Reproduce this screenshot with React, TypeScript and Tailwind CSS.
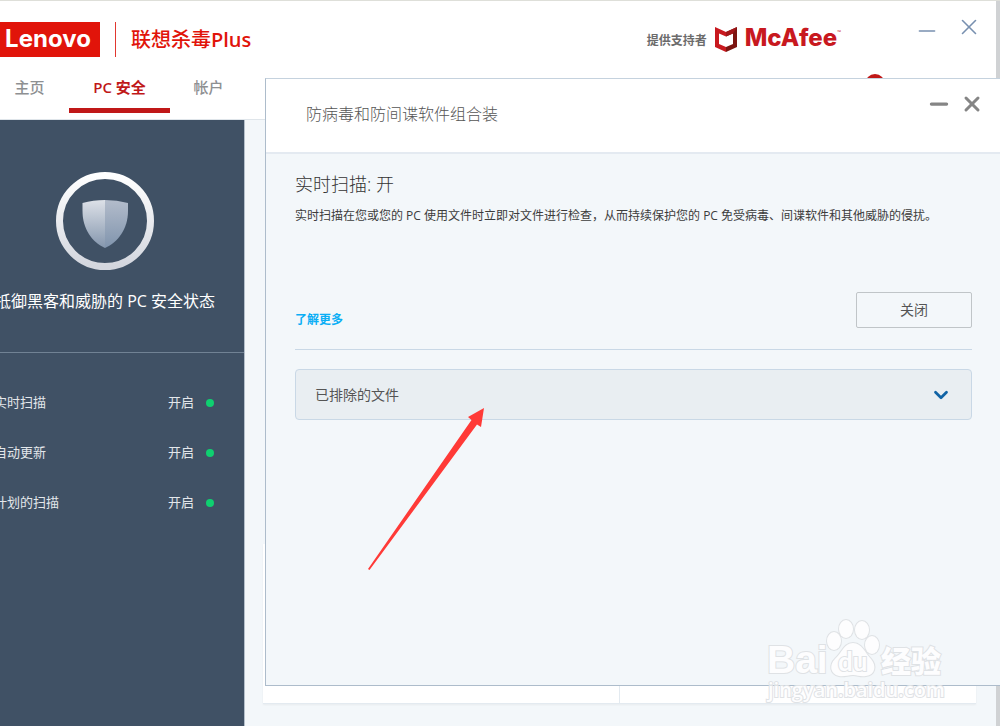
import { ChevronDown, Minus, X } from "lucide-react";

const tabs = [
  { label: "主页", active: false, className: "mr-[10px] w-[59px]" },
  { label: "PC 安全", active: true, className: "w-[101px]" },
  { label: "帐户", active: false, className: "w-[77px]" },
];

const statusItems = [
  { name: "实时扫描", state: "开启" },
  { name: "自动更新", state: "开启" },
  { name: "计划的扫描", state: "开启" },
];

function McAfeeMark() {
  return (
    <svg viewBox="0 0 22 25" className="h-[25px] w-[22px]" aria-hidden="true">
      <path d="M0 0L11 5V9.500L4 6.500V17L11 20V25L0 20Z" fill="#c8191f" />
      <path d="M22 0L11 5V9.500L18 6.500V17L11 20V25L22 20Z" fill="#7c1511" />
      <path d="M22 0L11 5V9.500L18 6.500Z" fill="#a3171a" />
    </svg>
  );
}

function ShieldBadge() {
  return (
    <svg viewBox="0 0 98 98" className="h-[98px] w-[98px]" aria-hidden="true">
      <defs>
        <linearGradient id="ring" x1="0" y1="0" x2="0" y2="1">
          <stop offset="0" stopColor="#ffffff" />
          <stop offset="1" stopColor="#d3d6de" />
        </linearGradient>
        <linearGradient id="shieldLeft" x1="0" y1="0" x2="0" y2="1">
          <stop offset="0" stopColor="#dde1e8" />
          <stop offset="1" stopColor="#8496ad" />
        </linearGradient>
        <linearGradient id="shieldRight" x1="0" y1="0" x2="0" y2="1">
          <stop offset="0" stopColor="#b3bccb" />
          <stop offset="1" stopColor="#8094ad" />
        </linearGradient>
      </defs>
      <circle cx="49" cy="49" r="45.5" fill="none" stroke="url(#ring)" strokeWidth="7" />
      <path d="M49 28Q37 28 26.500 31V39C26.500 57 36 70 49 76Z" fill="url(#shieldLeft)" />
      <path d="M49 28Q61 28 72 31V39C72 57 62 70 49 76Z" fill="url(#shieldRight)" />
    </svg>
  );
}

function Header() {
  return (
    <header className="h-[119px] border-b border-[#dfe5ea] bg-white pl-[34px]">
      <div className="flex h-[76px] items-center">
        <div className="flex h-[35px] w-[100px] items-center justify-center bg-[#e1140a] pr-1 font-['Inter'] text-[24px] leading-none font-bold text-white">
          Lenovo
        </div>
        <div className="ml-[15px] h-[35px] w-px bg-[#e1372f]" />
        <h1 className="ml-[15px] pt-0.5 text-[20px] leading-7 font-medium text-[#e1140a]">
          联想杀毒<span className="font-semibold">Plus</span>
        </h1>
        <div className="ml-auto flex items-center">
          <span className="pt-1 text-xs font-semibold text-[#6b6b6b]">提供支持者</span>
          <span className="ml-2">
            <McAfeeMark />
          </span>
          <span className="ml-2 pb-0.5 font-['Inter'] text-[24px] leading-none font-extrabold text-[#c8191f]">
            McAfee
          </span>
          <span className="mb-3 text-[5px] text-[#c8191f]">™</span>
        </div>
        <div className="mr-[14px] mb-6 ml-[73px] flex items-center gap-4 text-[#7890b0]">
          <button type="button" aria-label="最小化" className="pt-2">
            <Minus size={26} strokeWidth={1.5} />
          </button>
          <button type="button" aria-label="关闭窗口">
            <X size={26} strokeWidth={1.5} />
          </button>
        </div>
      </div>
      <nav className="flex h-9">
        {tabs.map((tab) => (
          <button
            key={tab.label}
            type="button"
            className={`border-b-5 pb-5 text-[15px] leading-5 ${tab.className} ${
              tab.active
                ? "border-[#c01818] font-semibold text-[#c01818]"
                : "border-transparent font-medium text-[#8e9092]"
            }`}
          >
            {tab.label}
          </button>
        ))}
      </nav>
    </header>
  );
}

function Sidebar() {
  return (
    <aside className="w-[279px] shrink-0 border-r border-[#b5c0cb] bg-[#405165] text-white">
      <div className="flex h-[233px] flex-col items-center border-b border-[#718294] pt-[52px]">
        <ShieldBadge />
        <p className="mt-[19px] text-base leading-6">抵御黑客和威胁的 PC 安全状态</p>
      </div>
      <ul className="pt-[25px] pr-[30px] pl-7 text-[13px] text-[#e3e7eb]">
        {statusItems.map((item) => (
          <li key={item.name} className="flex h-[50px] items-center">
            <span>{item.name}</span>
            <span className="ml-auto">{item.state}</span>
            <span className="ml-3 h-2 w-2 rounded-full bg-[#0fd070]" />
          </li>
        ))}
      </ul>
    </aside>
  );
}

function ScanDialog() {
  return (
    <section
      role="dialog"
      aria-labelledby="dialog-title"
      className="absolute top-[77px] right-0 bottom-10 left-[265px] border-t border-b border-l border-t-[#c5d2de] border-b-[#adbccb] border-l-[#adbccb] bg-[#f3f7fa]"
    >
      <div className="flex h-[75px] items-center border-b-2 border-[#e4eaf1] bg-white pr-4 pl-10">
        <h2 id="dialog-title" className="pb-1 text-base font-light text-[#555]">
          防病毒和防间谍软件组合装
        </h2>
        <div className="mb-6 ml-auto flex items-center gap-2 text-[#858585]">
          <button type="button" aria-label="最小化对话框">
            <Minus size={26} strokeWidth={3} />
          </button>
          <button type="button" aria-label="关闭对话框">
            <X size={24} strokeWidth={3} />
          </button>
        </div>
      </div>

      <div className="pr-7 pl-[29px]">
        <h3 className="pt-4 text-lg leading-7 font-light text-[#333]">实时扫描: 开</h3>
        <p className="mt-2 text-xs leading-5 text-[#3c3c3c]">
          实时扫描在您或您的 PC 使用文件时立即对文件进行检查，从而持续保护您的 PC 免受病毒、间谍软件和其他威胁的侵扰。
        </p>
        <div className="mt-[66px] flex items-start justify-between border-b border-[#c9d8e6] pb-[19px]">
          <a href="#" className="pt-[18px] text-xs leading-5 font-bold text-[#0aaef5]">
            了解更多
          </a>
          <button
            type="button"
            className="h-9 w-[116px] rounded-xs border border-[#c0c5c8] text-sm text-[#555]"
          >
            关闭
          </button>
        </div>
        <button
          type="button"
          aria-expanded="false"
          className="mt-[19px] flex h-[51px] w-full items-center justify-between rounded-sm border border-[#c9d8e6] bg-[#e9eef2] px-[19px] text-sm text-[#555]"
        >
          已排除的文件
          <ChevronDown size={22} strokeWidth={3} className="text-[#1163a5]" />
        </button>
      </div>
    </section>
  );
}

function Arrow() {
  return (
    <svg
      viewBox="0 0 118 164"
      className="pointer-events-none absolute top-[406px] left-[367px] h-[164px] w-[118px]"
      aria-hidden="true"
    >
      <path d="M117 1L101 10L104.500 13L1 162L2.500 163L110 17.500L114 20Z" fill="#ff3a37" />
    </svg>
  );
}

function Watermark() {
  return (
    <svg
      viewBox="0 0 184 90"
      className="pointer-events-none absolute right-[52px] bottom-[20px] h-[90px] w-[184px] overflow-visible"
      aria-hidden="true"
    >
      <g fill="#fdfdfe" stroke="#dfe2e5" strokeWidth="2" paintOrder="stroke">
        <text x="3" y="57" fontFamily="Liberation Sans" fontWeight="700" fontSize="39">
          Bai
        </text>
        <ellipse cx="70" cy="25" rx="7" ry="9" />
        <ellipse cx="82" cy="13" rx="7" ry="9" />
        <ellipse cx="98" cy="14" rx="7" ry="9" />
        <ellipse cx="108" cy="29" rx="7" ry="9" />
        <path d="M89 27C98 27 101 37 107 43C113 50 111 59 102 60C96 61 94 59 89 59C84 59 80 61 75 60C66 58 65 49 71 43C78 37 80 27 89 27Z" />
        <text x="74" y="55" fontFamily="Lato" fontWeight="700" fontSize="26">
          du
        </text>
        <text x="117" y="56" fontFamily="Noto Sans CJK SC" fontWeight="900" fontSize="30">
          经验
        </text>
        <text x="4" y="81" fontFamily="Open Sans" fontSize="20" fontWeight="600">
          jingyan.baidu.com
        </text>
      </g>
    </svg>
  );
}

export default function App() {
  return (
    <div className="relative flex min-h-screen flex-col overflow-hidden border-t border-[#dedfd9] bg-[#d0d2d4] font-['Open_Sans','Noto_Sans_CJK_SC',sans-serif]">
      {/* The suite window runs past the left edge of the screen */}
      <div className="mr-1 -ml-[34px] flex flex-1 flex-col bg-[#f3f7fa]">
        <Header />
        <div className="flex flex-1">
          <Sidebar />
          <main className="flex flex-1 flex-col justify-end pr-5 pb-[22px] pl-[18px]">
            <div className="grid h-40 grid-cols-2 divide-x divide-[#e3eaf0] border-b border-[#e3eaf0] bg-white shadow-xs">
              <div />
              <div />
            </div>
          </main>
        </div>
      </div>
      <span className="absolute top-[73px] left-[865px] h-5 w-5 rounded-full bg-[#c01818]" />
      <ScanDialog />
      <Arrow />
      <Watermark />
    </div>
  );
}
